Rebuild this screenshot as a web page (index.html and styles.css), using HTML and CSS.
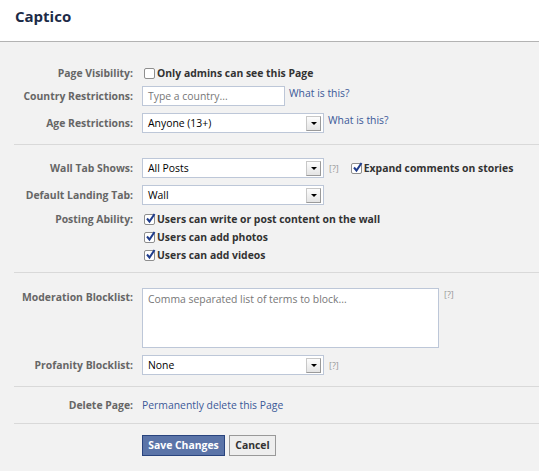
FILE: index.html
```html
<!DOCTYPE html>
<html>
<head>
<meta charset="utf-8">
<link rel="stylesheet" href="styles.css">
</head>
<body>
<div class="header"><h1 class="title">Captico</h1></div>
<div class="content">
  <div class="section s1">
    <div class="row r-check">
      <div class="label">Page Visibility:</div>
      <div class="field">
        <label class="cb"><span class="box"></span>Only admins can see this Page</label>
      </div>
    </div>
    <div class="row r-ctl">
      <div class="label">Country Restrictions:</div>
      <div class="field">
        <div class="input input-country"><span class="ph">Type a country...</span></div>
        <a class="link">What is this?</a>
      </div>
    </div>
    <div class="row r-ctl">
      <div class="label">Age Restrictions:</div>
      <div class="field">
        <div class="select"><span class="val">Anyone (13+)</span><span class="arrow"><span class="tri"></span></span></div>
        <a class="link">What is this?</a>
      </div>
    </div>
  </div>
  <div class="section s2">
    <div class="row r-ctl">
      <div class="label">Wall Tab Shows:</div>
      <div class="field">
        <div class="select"><span class="val">All Posts</span><span class="arrow"><span class="tri"></span></span></div>
        <span class="help">[?]</span>
        <label class="cb cb-expand"><span class="box checked"><svg viewBox="0 0 11 11"><path d="M2 5.5 L4.5 8.5 L9.5 1" fill="none" stroke="#1f3c8c" stroke-width="2"/></svg></span>Expand comments on stories</label>
      </div>
    </div>
    <div class="row r-ctl">
      <div class="label">Default Landing Tab:</div>
      <div class="field">
        <div class="select"><span class="val">Wall</span><span class="arrow"><span class="tri"></span></span></div>
      </div>
    </div>
    <div class="row r-posting">
      <div class="label">Posting Ability:</div>
      <div class="field stack">
        <label class="cb"><span class="box checked"><svg viewBox="0 0 11 11"><path d="M2 5.5 L4.5 8.5 L9.5 1" fill="none" stroke="#1f3c8c" stroke-width="2"/></svg></span>Users can write or post content on the wall</label>
        <label class="cb"><span class="box checked"><svg viewBox="0 0 11 11"><path d="M2 5.5 L4.5 8.5 L9.5 1" fill="none" stroke="#1f3c8c" stroke-width="2"/></svg></span>Users can add photos</label>
        <label class="cb"><span class="box checked"><svg viewBox="0 0 11 11"><path d="M2 5.5 L4.5 8.5 L9.5 1" fill="none" stroke="#1f3c8c" stroke-width="2"/></svg></span>Users can add videos</label>
      </div>
    </div>
  </div>
  <div class="section s3">
    <div class="row r-area">
      <div class="label">Moderation Blocklist:</div>
      <div class="field top">
        <div class="textarea"><span class="ph">Comma separated list of terms to block...</span></div>
        <span class="help help-area">[?]</span>
      </div>
    </div>
    <div class="row r-ctl">
      <div class="label">Profanity Blocklist:</div>
      <div class="field">
        <div class="select"><span class="val">None</span><span class="arrow"><span class="tri"></span></span></div>
        <span class="help">[?]</span>
      </div>
    </div>
  </div>
  <div class="section s4">
    <div class="row r-check">
      <div class="label">Delete Page:</div>
      <div class="field"><a class="link">Permanently delete this Page</a></div>
    </div>
  </div>
  <div class="buttons">
    <button class="btn btn-primary">Save Changes</button>
    <button class="btn btn-cancel">Cancel</button>
  </div>
</div>
</body>
</html>
```
FILE: styles.css
```css
* { box-sizing: border-box; }
html, body { margin: 0; padding: 0; }
body {
  background: #f2f2f2;
  font-family: "Open Sans", "DejaVu Sans", sans-serif;
  font-size: 10.4px;
  color: #333;
  width: 539px;
  height: 471px;
  overflow: hidden;
}
.header {
  background: #fff;
  height: 42px;
  border-bottom: 1px solid #b3b3b3;
  padding: 7px 0 0 15px;
}
.title {
  margin: 0;
  font-size: 15px;
  font-weight: bold;
  color: #1c2a47;
  line-height: 18px;
}
.content { padding-left: 14px; }
.section { border-bottom: 1px solid #d9d9d9; }
.s1 { padding: 23px 0 11px; }
.s2 { padding: 13px 0 8px; }
.s3 { padding: 15px 0 11px; }
.s4 { padding: 10px 0 10px; }
.row { display: flex; align-items: center; }
.row + .row { margin-top: 7px; }
.r-check { height: 16px; }
.r-check + .r-ctl { margin-top: 5px; }
.r-ctl { height: 20px; }
.r-posting { align-items: flex-start; margin-top: 5px !important; }
.r-area { align-items: flex-start; }
.label {
  width: 120px;
  flex: none;
  text-align: right;
  font-weight: bold;
  color: #666;
  padding-right: 1px;
}
.r-posting .label { line-height: 18px; }
.r-area .label { padding-top: 2px; }
.field { margin-left: 8px; display: flex; align-items: center; }
.field.top { align-items: flex-start; }
.stack { flex-direction: column; align-items: flex-start; }
.cb { display: flex; align-items: center; font-weight: bold; color: #333; height: 18px; white-space: nowrap; }
.r-check .cb { height: 16px; }
.box {
  width: 11px; height: 11px; margin-left: 2px; margin-right: 2px;
  border: 1px solid #8e8e8e; border-radius: 2px; background: #fff; position: relative; flex: none;
}
.box.checked svg { position: absolute; left: 0; top: -2px; width: 11px; height: 11px; }
.input, .select, .textarea {
  background: #fff; border: 1px solid #bdc7d8; height: 20px;
  display: flex; align-items: center; padding-left: 5px; color: #000;
}
.input-country { width: 143px; }
.ph { color: #777; }
.select { width: 182px; justify-content: space-between; padding-right: 2px; }
.arrow {
  width: 15px; height: 15px; border: 1px solid #9a9a9a; border-top-color: #c8c8c8; border-left-color: #c8c8c8;
  background: linear-gradient(#fdfdfd, #e4e4e4); display: flex; align-items: center; justify-content: center;
}
.tri { width: 0; height: 0; border-left: 3px solid transparent; border-right: 3px solid transparent; border-top: 3px solid #000; }
.link { color: #3b5998; margin-left: 4px; cursor: pointer; white-space: nowrap; }
.r-ctl .link { position: relative; top: -3px; }
.s4 .link { margin-left: 0; }
.help { color: #999; font-size: 9px; margin-left: 5px; }
.cb-expand { margin-left: 10px; }
.textarea { width: 297px; height: 60px; align-items: flex-start; padding-top: 3px; }
.buttons { padding: 11px 0 0 128px; display: flex; gap: 4px; }
.btn {
  font-family: inherit; font-size: 10.4px; font-weight: bold; height: 21px; padding: 0; margin: 0;
  line-height: 19px; white-space: nowrap;
}
.btn-primary { background: #5b74a8; border: 1px solid #29447e; color: #fff; width: 83px; }
.btn-cancel { background: #eee; border: 1px solid #999; color: #333; width: 47px; }
```
